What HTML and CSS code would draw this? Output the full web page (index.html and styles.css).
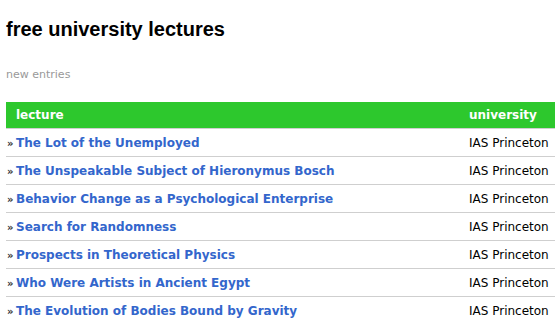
FILE: index.html
```html
<!DOCTYPE html>
<html>
<head>
<meta charset="utf-8">
<link rel="stylesheet" href="styles.css">
</head>
<body>
<h1 class="title">free university lectures</h1>
<p class="sub">new entries</p>
<table class="list">
<thead>
<tr><th class="c-lec">lecture</th><th class="c-uni">university</th></tr>
</thead>
<tbody>
<tr><td class="c-lec"><span class="bul">»</span><a href="#">The Lot of the Unemployed</a></td><td class="c-uni">IAS Princeton</td></tr>
<tr><td class="c-lec"><span class="bul">»</span><a href="#">The Unspeakable Subject of Hieronymus Bosch</a></td><td class="c-uni">IAS Princeton</td></tr>
<tr><td class="c-lec"><span class="bul">»</span><a href="#">Behavior Change as a Psychological Enterprise</a></td><td class="c-uni">IAS Princeton</td></tr>
<tr><td class="c-lec"><span class="bul">»</span><a href="#">Search for Randomness</a></td><td class="c-uni">IAS Princeton</td></tr>
<tr><td class="c-lec"><span class="bul">»</span><a href="#">Prospects in Theoretical Physics</a></td><td class="c-uni">IAS Princeton</td></tr>
<tr><td class="c-lec"><span class="bul">»</span><a href="#">Who Were Artists in Ancient Egypt</a></td><td class="c-uni">IAS Princeton</td></tr>
<tr><td class="c-lec"><span class="bul">»</span><a href="#">The Evolution of Bodies Bound by Gravity</a></td><td class="c-uni">IAS Princeton</td></tr>
</tbody>
</table>
</body>
</html>
```

FILE: styles.css
```css
html, body {
  margin: 0;
  padding: 0;
  background: #fff;
}
body {
  padding: 0 0 0 6px;
  font-family: "DejaVu Sans", Verdana, sans-serif;
  font-size: 12px;
  color: #000;
}
.title {
  font-family: "Liberation Sans", Arial, sans-serif;
  font-size: 20px;
  font-weight: bold;
  margin: 0;
  padding-top: 18px;
  line-height: 23px;
}
.sub {
  margin: 0;
  padding-top: 27px;
  font-size: 11px;
  line-height: 14px;
  color: #999;
}
.list {
  margin-top: 20px;
  width: 549px;
  border-collapse: collapse;
}
.list th {
  background: #2dc82d;
  color: #fff;
  font-weight: bold;
  text-align: left;
  height: 26px;
  padding: 0;
  border-bottom: 1px solid #cfcfcf;
  white-space: nowrap;
}
.list th.c-lec {
  padding-left: 10px;
}
.list td {
  height: 27px;
  padding: 0;
  border-bottom: 1px solid #cfcfcf;
  white-space: nowrap;
}
.list td.c-lec {
  padding-left: 1px;
}
.list .c-uni {
  width: 80px;
  padding-right: 6px;
}
.bul {
  display: inline-block;
  width: 9px;
  font-size: 10px;
  font-weight: bold;
  color: #333;
}
.list a {
  color: #3366cc;
  font-weight: bold;
  text-decoration: none;
}
```
